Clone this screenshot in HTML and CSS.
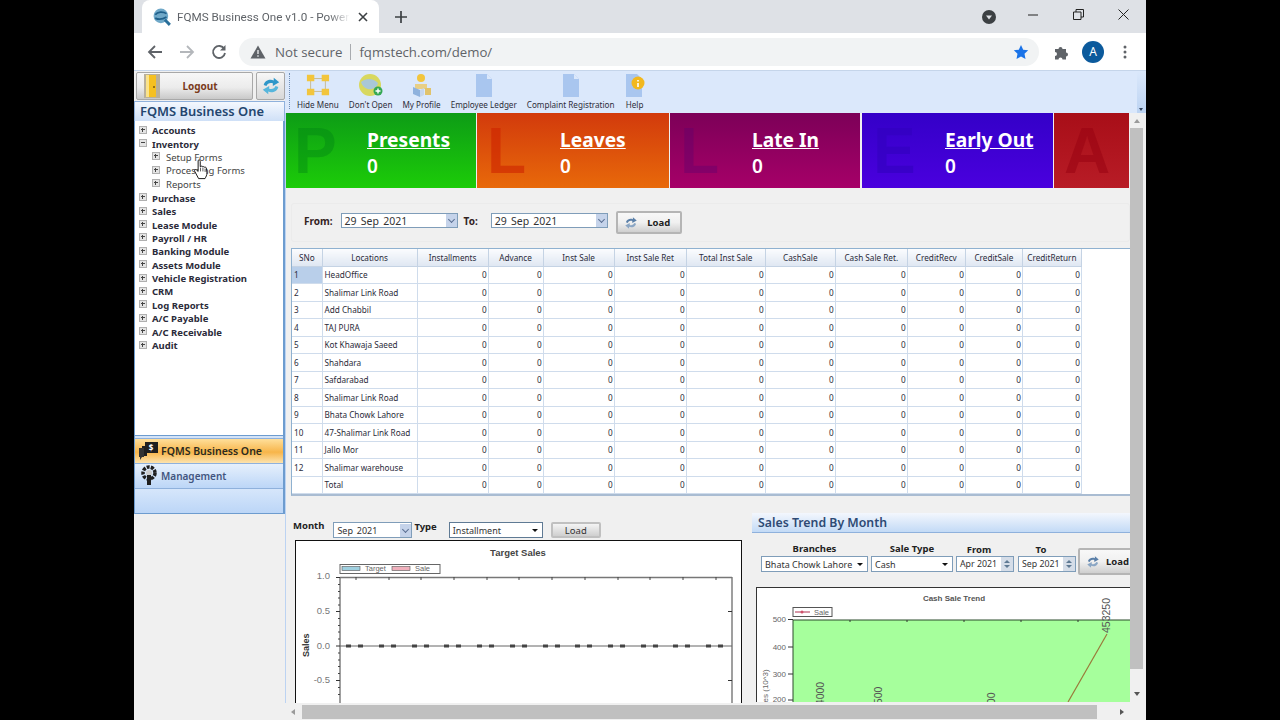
FILE: index.html
```html
<!DOCTYPE html>
<html lang="en">
<head>
  <meta charset="UTF-8">
  <title>FQMS Business One v1.0</title>
  <link rel="stylesheet" href="styles.css">
</head>
<body>
<div class="window">
  <!-- browser chrome -->
  <div class="tabstrip">
    <div class="tab">
      <svg class="favicon" width="18" height="18" viewBox="0 0 16 16"><circle cx="7" cy="7" r="6.500" fill="#6fa8c8"/><path d="M2 6c2-3 7-3 10-1M2 9c3 1.500 6 1.500 10-1" stroke="#1f5f8a" stroke-width="1.500" fill="none"/><path d="M10.500 10.500l4.500 4.500" stroke="#2a6f9a" stroke-width="2.600"/></svg>
      <span class="tab-title">FQMS Business One v1.0 - Power</span>
      <svg class="tab-close" width="10" height="10" viewBox="0 0 10 10"><path d="M1 1l8 8M9 1l-8 8" stroke="#3c4043" stroke-width="1.6"/></svg>
    </div>
    <svg class="new-tab" width="14" height="14" viewBox="0 0 14 14"><path d="M7 1v12M1 7h12" stroke="#3c4043" stroke-width="1.7"/></svg>
    <div class="window-controls">
      <svg class="tab-search" width="14" height="14" viewBox="0 0 14 14"><circle cx="7" cy="7" r="7" fill="#3c4043"/><path d="M4 5.5h6L7 9.5z" fill="#dee1e6"/></svg>
      <svg class="win-min" width="10" height="2" viewBox="0 0 10 2"><path d="M0 1h10" stroke="#222" stroke-width="1"/></svg>
      <svg class="win-restore" width="11" height="11" viewBox="0 0 11 11"><path d="M.5 3h7.500v7.500H.5zM3 3V.5h7.500V8H8" stroke="#222" fill="none"/></svg>
      <svg class="win-close" width="11" height="11" viewBox="0 0 11 11"><path d="M.5.500l10 10M10.500.500l-10 10" stroke="#222"/></svg>
    </div>
  </div>
  <div class="navbar">
    <svg class="nav-btn" width="16" height="16" viewBox="0 0 16 16"><path d="M15 8H2M8 2L2 8l6 6" stroke="#5f6368" stroke-width="1.800" fill="none"/></svg>
    <svg class="nav-btn" width="16" height="16" viewBox="0 0 16 16"><path d="M1 8h13M8 2l6 6-6 6" stroke="#b4b7bb" stroke-width="1.800" fill="none"/></svg>
    <svg class="nav-btn" width="16" height="16" viewBox="0 0 16 16"><path d="M13.300 5A6 6 0 1 0 14 9" stroke="#5f6368" stroke-width="1.800" fill="none"/><path d="M14.500 1v5.500H9z" fill="#5f6368"/></svg>
    <div class="omnibox">
      <svg width="16" height="14" viewBox="0 0 16 14"><path d="M8 .5L15.500 13.500H.5z" fill="#5f6368"/><path d="M8 5v4M8 10.200v1.600" stroke="#f1f3f4" stroke-width="1.300"/></svg>
      <span class="not-secure">Not secure</span>
      <span class="omni-sep"></span>
      <span class="url">fqmstech.com/demo/</span>
      <svg class="star" width="16" height="16" viewBox="0 0 16 16"><path d="M8 1l2.200 4.700 5 .6-3.700 3.500 1 5.100L8 12.400l-4.500 2.500 1-5.100L.8 6.300l5-.6z" fill="#1a73e8"/></svg>
    </div>
    <svg class="puzzle" width="16" height="16" viewBox="0 0 16 16"><path d="M1 5h3.500a2 2 0 1 1 4 0H12v3.500a2 2 0 1 1 0 4V15.500H8.500a2 2 0 1 0-4 0H1v-3.500a2 2 0 1 0 0-4z" fill="#5f6368"/></svg>
    <div class="avatar">A</div>
    <svg class="kebab" width="4" height="14" viewBox="0 0 4 14"><circle cx="2" cy="2" r="1.500" fill="#5f6368"/><circle cx="2" cy="7" r="1.500" fill="#5f6368"/><circle cx="2" cy="12" r="1.500" fill="#5f6368"/></svg>
  </div>

  <!-- application -->
  <div class="app">
    <aside class="sidebar">
      <div class="logout-row">
        <button class="logout-btn">
          <svg width="16" height="24" viewBox="0 0 16 24"><rect width="16" height="24" fill="#b9b09a"/><path d="M2 1h10v22H2z" fill="#f5c021"/><path d="M2 1h3v22H2z" fill="#fbe38a"/><circle cx="10" cy="13" r="1" fill="#7a5a10"/></svg>
          <span>Logout</span>
        </button>
        <button class="refresh-btn">
          <svg width="20" height="22" viewBox="0 0 22 22"><path d="M3 10c1-5 7-7 11-5V2l6 5-7 4V8c-3-1-6 0-7 3z" fill="#2f97c9"/><path d="M19 12c-1 5-7 7-11 5v3l-6-5 7-4v3c3 1 6 0 7-3z" fill="#57b6dc"/></svg>
        </button>
      </div>
      <div class="side-title">FQMS Business One</div>
      <ul class="tree">
        <li class="node"><i class="box plus"></i>Accounts</li>
        <li class="node"><i class="box minus"></i>Inventory</li>
        <li class="node sub"><i class="box plus"></i>Setup Forms</li>
        <li class="node sub"><i class="box plus"></i>Processing Forms</li>
        <li class="node sub"><i class="box plus"></i>Reports</li>
        <li class="node after-sub"><i class="box plus"></i>Purchase</li>
        <li class="node"><i class="box plus"></i>Sales</li>
        <li class="node"><i class="box plus"></i>Lease Module</li>
        <li class="node"><i class="box plus"></i>Payroll / HR</li>
        <li class="node"><i class="box plus"></i>Banking Module</li>
        <li class="node"><i class="box plus"></i>Assets Module</li>
        <li class="node"><i class="box plus"></i>Vehicle Registration</li>
        <li class="node"><i class="box plus"></i>CRM</li>
        <li class="node"><i class="box plus"></i>Log Reports</li>
        <li class="node"><i class="box plus"></i>A/C Payable</li>
        <li class="node"><i class="box plus"></i>A/C Receivable</li>
        <li class="node"><i class="box plus"></i>Audit</li>
      </ul>
      <div class="accordion">
        <div class="acc-item active">
          <svg width="20" height="20" viewBox="0 0 20 20"><path d="M6 1h13v11H8v3H3V5h3z" fill="#1f1f1f"/><path d="M0 7h5v9H3l-2 3v-3H0z" fill="#333"/><text x="12" y="9.500" class="acc-dollar">$</text></svg>
          <span>FQMS Business One</span>
        </div>
        <div class="acc-item">
          <svg width="20" height="22" viewBox="0 0 20 22"><circle cx="10" cy="8" r="6" fill="none" stroke="#1f1f1f" stroke-width="3.500" stroke-dasharray="3 1.200"/><circle cx="10" cy="8" r="3" fill="#ccc"/><path d="M8 10h4v10H8z" fill="#1f1f1f"/></svg>
          <span class="acc-mgmt">Management</span>
        </div>
        <div class="acc-blank"></div>
      </div>
    </aside>

    <div class="workspace">
      <div class="ribbon">
        <div class="grip"></div>
        <div class="tool">
          <svg width="24" height="24" viewBox="0 0 26 24"><path d="M5 5h16v14H5z" fill="none" stroke="#c8b98a"/><path d="M1 1h8v7H1zM17 1h8v7h-8zM1 16h8v7H1zM17 16h8v7h-8z" fill="#f2c53d"/></svg>
          <span>Hide Menu</span>
        </div>
        <div class="tool">
          <svg width="26" height="24" viewBox="0 0 26 24"><circle cx="12" cy="12" r="11" fill="#d8d860"/><path d="M3 9c5-4 12-4 17 1-2 8-14 9-17-1z" fill="#a9c7d8"/><circle cx="20" cy="18" r="4.500" fill="#35a853"/><path d="M20 15.500v5M17.500 18h5" stroke="#fff" stroke-width="1.400"/></svg>
          <span>Don't Open</span>
        </div>
        <div class="tool">
          <svg width="22" height="24" viewBox="0 0 22 24"><circle cx="10" cy="5" r="4" fill="#f2c53d"/><path d="M4 11h12v5H4z" fill="#e8cf86"/><path d="M2 14l7 3v7l-7-3z" fill="#8fb2dd"/><path d="M9 17l4-2v7l-4 2z" fill="#c6d7ee"/><path d="M14 15h6v7h-6z" fill="#e1c36b"/></svg>
          <span>My Profile</span>
        </div>
        <div class="tool">
          <svg width="18" height="24" viewBox="0 0 18 24"><path d="M1 1h11l5 5v18H1z" fill="#a9c6ef"/><path d="M12 1l5 5h-5z" fill="#dbe8fb"/></svg>
          <span>Employee Ledger</span>
        </div>
        <div class="tool">
          <svg width="18" height="24" viewBox="0 0 18 24"><path d="M1 1h11l5 5v18H1z" fill="#a9c6ef"/><path d="M12 1l5 5h-5z" fill="#dbe8fb"/></svg>
          <span>Complaint Registration</span>
        </div>
        <div class="tool">
          <svg width="20" height="24" viewBox="0 0 20 24"><path d="M1 1h11l5 5v18H1z" fill="#a9c6ef"/><circle cx="13" cy="10" r="6.500" fill="#f2b81e"/><path d="M13 7v1.500M13 10v4" stroke="#fff" stroke-width="1.600"/></svg>
          <span>Help</span>
        </div>
        <div class="ribbon-end"><i></i></div>
      </div>

      <div class="work-body">
        <div class="viewport">
          <div class="tiles">
            <div class="tile green"><span class="ghost">P</span><div class="tile-text"><a>Presents</a><b>0</b></div></div>
            <div class="tile orange"><span class="ghost">L</span><div class="tile-text"><a>Leaves</a><b>0</b></div></div>
            <div class="tile purple"><span class="ghost">L</span><div class="tile-text"><a>Late In</a><b>0</b></div></div>
            <div class="tile blue"><span class="ghost">E</span><div class="tile-text"><a>Early Out</a><b>0</b></div></div>
            <div class="tile red"><span class="ghost">A</span></div>
          </div>

          <div class="filter">
            <label>From:</label>
            <div class="combo date-combo"><span>29 Sep 2021</span><i class="drop"></i></div>
            <label>To:</label>
            <div class="combo date-combo"><span>29 Sep 2021</span><i class="drop"></i></div>
            <button class="load-btn">
              <svg width="14" height="14" viewBox="0 0 22 22"><path d="M3 10c1-5 7-7 11-5V2l6 5-7 4V8c-3-1-6 0-7 3z" fill="#5a7fa8"/><path d="M19 12c-1 5-7 7-11 5v3l-6-5 7-4v3c3 1 6 0 7-3z" fill="#8ba6c4"/></svg>
              <span>Load</span>
            </button>
          </div>

          <div class="grid-wrap">
            <table class="grid">
              <thead>
                <tr><th class="c-sno">SNo</th><th class="c-loc">Locations</th><th class="c1">Installments</th><th class="c2">Advance</th><th class="c3">Inst Sale</th><th class="c4">Inst Sale Ret</th><th class="c5">Total Inst Sale</th><th class="c6">CashSale</th><th class="c7">Cash Sale Ret.</th><th class="c8">CreditRecv</th><th class="c9">CreditSale</th><th class="c10">CreditReturn</th></tr>
              </thead>
              <tbody>
                <tr class="selected"><td>1</td><td>HeadOffice</td><td>0</td><td>0</td><td>0</td><td>0</td><td>0</td><td>0</td><td>0</td><td>0</td><td>0</td><td>0</td></tr>
                <tr><td>2</td><td>Shalimar Link Road</td><td>0</td><td>0</td><td>0</td><td>0</td><td>0</td><td>0</td><td>0</td><td>0</td><td>0</td><td>0</td></tr>
                <tr><td>3</td><td>Add Chabbil</td><td>0</td><td>0</td><td>0</td><td>0</td><td>0</td><td>0</td><td>0</td><td>0</td><td>0</td><td>0</td></tr>
                <tr><td>4</td><td>TAJ PURA</td><td>0</td><td>0</td><td>0</td><td>0</td><td>0</td><td>0</td><td>0</td><td>0</td><td>0</td><td>0</td></tr>
                <tr><td>5</td><td>Kot Khawaja Saeed</td><td>0</td><td>0</td><td>0</td><td>0</td><td>0</td><td>0</td><td>0</td><td>0</td><td>0</td><td>0</td></tr>
                <tr><td>6</td><td>Shahdara</td><td>0</td><td>0</td><td>0</td><td>0</td><td>0</td><td>0</td><td>0</td><td>0</td><td>0</td><td>0</td></tr>
                <tr><td>7</td><td>Safdarabad</td><td>0</td><td>0</td><td>0</td><td>0</td><td>0</td><td>0</td><td>0</td><td>0</td><td>0</td><td>0</td></tr>
                <tr><td>8</td><td>Shalimar Link Road</td><td>0</td><td>0</td><td>0</td><td>0</td><td>0</td><td>0</td><td>0</td><td>0</td><td>0</td><td>0</td></tr>
                <tr><td>9</td><td>Bhata Chowk Lahore</td><td>0</td><td>0</td><td>0</td><td>0</td><td>0</td><td>0</td><td>0</td><td>0</td><td>0</td><td>0</td></tr>
                <tr><td>10</td><td>47-Shalimar Link Road</td><td>0</td><td>0</td><td>0</td><td>0</td><td>0</td><td>0</td><td>0</td><td>0</td><td>0</td><td>0</td></tr>
                <tr><td>11</td><td>Jallo Mor</td><td>0</td><td>0</td><td>0</td><td>0</td><td>0</td><td>0</td><td>0</td><td>0</td><td>0</td><td>0</td></tr>
                <tr><td>12</td><td>Shalimar warehouse</td><td>0</td><td>0</td><td>0</td><td>0</td><td>0</td><td>0</td><td>0</td><td>0</td><td>0</td><td>0</td></tr>
                <tr><td></td><td>Total</td><td>0</td><td>0</td><td>0</td><td>0</td><td>0</td><td>0</td><td>0</td><td>0</td><td>0</td><td>0</td></tr>
              </tbody>
            </table>
          </div>

          <div class="lower">
            <section class="target-panel">
              <div class="target-form">
                <label class="lbl-month">Month</label>
                <div class="combo month-combo"><span>Sep 2021</span><i class="drop"></i></div>
                <label class="lbl-type">Type</label>
                <div class="combo type-combo"><span>Installment</span><i class="caret"></i></div>
                <button class="plain-btn">Load</button>
              </div>
              <svg class="chart target-chart" width="447" height="163" viewBox="296 541 445 162">
                <text x="518" y="556" class="c-title" text-anchor="middle">Target Sales</text>
                <rect x="340" y="564.500" width="100" height="9" fill="#fff" stroke="#666"/>
                <rect x="342" y="566.500" width="18" height="4" fill="#9fd0e0" stroke="#555" stroke-width=".6"/>
                <text x="365" y="571" class="c-legend">Target</text>
                <rect x="392" y="566.500" width="18" height="4" fill="#f0b0bc" stroke="#555" stroke-width=".6"/>
                <text x="415" y="571" class="c-legend">Sale</text>
                <path d="M340 577.500H732M340 577V703M732 577V703" stroke="#777" stroke-width="1.400" fill="none"/>
                <path d="M340 646H732" stroke="#666"/>
                <path d="M336 577.500h4M336 611.500h4M336 646h4M336 680.500h4M728 611.500h4M728 680.500h4" stroke="#333"/>
                <path d="M338 584.500h2M338 591.500h2M338 598h2M338 605h2M338 618.500h2M338 625.500h2M338 632h2M338 639h2M338 653h2M338 660h2M338 666.500h2M338 673.500h2M338 687.500h2M338 694.500h2" stroke="#444"/>
                <path d="M356 577v3M389 577v3M421 577v3M454 577v3M487 577v3M519 577v3M552 577v3M585 577v3M618 577v3M650 577v3M683 577v3M716 577v3" stroke="#444"/>
                <path class="zero-dots" d="M346 646h5M358 646h5M379 646h5M391 646h5M412 646h5M424 646h5M444 646h5M456 646h5M477 646h5M489 646h5M510 646h5M522 646h5M543 646h5M555 646h5M575 646h5M587 646h5M608 646h5M620 646h5M641 646h5M653 646h5M673 646h5M685 646h5M706 646h5M718 646h5"/>
                <text x="330" y="579" class="c-tick" text-anchor="end">1.0</text>
                <text x="330" y="614" class="c-tick" text-anchor="end">0.5</text>
                <text x="330" y="649" class="c-tick" text-anchor="end">0.0</text>
                <text x="330" y="683" class="c-tick" text-anchor="end">-0.5</text>
                <text transform="translate(309 657) rotate(-90)" class="c-axis">Sales</text>
              </svg>
            </section>

            <section class="trend-panel">
              <h3 class="trend-head">Sales Trend By Month</h3>
              <div class="trend-form">
                <div class="field"><label>Branches</label><div class="combo branch-combo"><span>Bhata Chowk Lahore</span><i class="caret"></i></div></div>
                <div class="field"><label>Sale Type</label><div class="combo saletype-combo"><span>Cash</span><i class="caret"></i></div></div>
                <div class="field spin-field"><label>From</label><div class="combo spin-combo"><span>Apr 2021</span><i class="spin"></i></div></div>
                <div class="field spin-field"><label>To</label><div class="combo spin-combo"><span>Sep 2021</span><i class="spin"></i></div></div>
                <button class="load-btn trend-load">
                  <svg width="14" height="14" viewBox="0 0 22 22"><path d="M3 10c1-5 7-7 11-5V2l6 5-7 4V8c-3-1-6 0-7 3z" fill="#5a7fa8"/><path d="M19 12c-1 5-7 7-11 5v3l-6-5 7-4v3c3 1 6 0 7-3z" fill="#8ba6c4"/></svg>
                  <span>Load</span>
                </button>
              </div>
              <svg class="chart trend-chart" width="374" height="115" viewBox="757 589 373 114">
                <rect x="793" y="621" width="337" height="82" fill="#a6ff9c"/>
                <path d="M793 621H1130M793 621V703" stroke="#2b4a2b" fill="none"/>
                <path d="M788 620.500h5M788 648h5M788 675h5M788 701h5" stroke="#333"/>
                <path d="M850 621v2M907 621v2M964 621v2M1021 621v2M1078 621v2" stroke="#333"/>
                <text x="786" y="623" class="c-small" text-anchor="end">500</text>
                <text x="786" y="651" class="c-small" text-anchor="end">400</text>
                <text x="786" y="678" class="c-small" text-anchor="end">300</text>
                <text x="786" y="703" class="c-small" text-anchor="end">200</text>
                <text x="954" y="602" class="c-title2" text-anchor="middle">Cash Sale Trend</text>
                <rect x="793" y="608.500" width="39" height="9" fill="#fff" stroke="#555"/>
                <path d="M795 613h15" stroke="#b03050"/><circle cx="802" cy="613" r="1.500" fill="#d0506a"/>
                <text x="814" y="615.500" class="c-legend">Sale</text>
                <path d="M1107 635L1068 703" stroke="#9a7a3a" stroke-width="1.200"/>
                <text transform="translate(1110 634) rotate(-90)" class="c-value">453250</text>
                <text transform="translate(824 712) rotate(-90)" class="c-value">44000</text>
                <text transform="translate(882 711) rotate(-90)" class="c-value">2500</text>
                <text transform="translate(995 711) rotate(-90)" class="c-value">500</text>
                <text transform="translate(768 715) rotate(-90)" class="c-small">Sales (10^3)</text>
              </svg>
            </section>
          </div>
        </div>

        <div class="vscroll">
          <i class="arrow up"></i>
          <div class="vthumb"></div>
          <i class="arrow down"></i>
        </div>
      </div>

      <div class="hscroll">
        <i class="arrow left"></i>
        <div class="hthumb"></div>
        <i class="arrow right"></i>
      </div>
    </div>
  </div>

  <svg class="hand-cursor" width="18" height="22" viewBox="0 0 16 23"><path d="M5 1.500c1-1 2.200-.5 2.200 1V8l1-.5c.8-.2 1.500 0 1.700.7.800-.5 1.700-.2 1.900.5.800-.3 1.700 0 1.900.9l.5 4.900c0 2.500-1 4-2 6H5.500L1.500 13c-.8-1.500.6-2.500 1.700-1.700L5 13z" fill="#fff" stroke="#111" stroke-width="1"/><path d="M7.500 9v4M10 9v4M12.300 10v3.500" stroke="#111" stroke-width=".7"/></svg>
</div>
</body>
</html>
```

FILE: styles.css
```css
* {
  box-sizing: border-box;
}
body {
  margin: 0;
  height: 720px;
  overflow: hidden;
  background-color: #000;
  display: flex;
  justify-content: center;
  font-family: "Noto Sans", "Open Sans", sans-serif;
}
.window {
  position: relative;
  width: 1012px;
  height: 720px;
  display: flex;
  flex-direction: column;
  background-color: #f0f0f0;
  overflow: hidden;
}

/* browser chrome */
.tabstrip {
  height: 33px;
  flex: none;
  background-color: #dee1e6;
  display: flex;
  align-items: flex-end;
  padding-left: 8px;
}
.tab {
  width: 237px;
  height: 33px;
  background-color: #fff;
  border-radius: 8px 8px 0 0;
  display: flex;
  align-items: center;
  padding: 0 11px 0 11px;
}
.tab-title {
  flex: 1;
  min-width: 0;
  margin-left: 6px;
  font-size: 11.700px;
  color: #5f6368;
  white-space: nowrap;
  font-family: Roboto, sans-serif;
  -webkit-mask-image: linear-gradient(to right, #000 88%, transparent);
  mask-image: linear-gradient(to right, #000 88%, transparent);
}
.tab-close {
  margin-left: 8px;
}
.new-tab {
  margin: 0 0 9px 15px;
}
.window-controls {
  margin-left: auto;
  height: 33px;
  display: flex;
  align-items: center;
  padding-right: 17px;
}
.win-min {
  margin-left: 32px;
  margin-top: -4px;
}
.win-restore {
  margin-left: 35px;
  margin-top: -4px;
}
.win-close {
  margin-left: 34px;
  margin-top: -4px;
}
.navbar {
  height: 37px;
  flex: none;
  background-color: #fff;
  display: flex;
  align-items: center;
  padding-left: 13px;
}
.nav-btn {
  margin-right: 16px;
}
.omnibox {
  width: 800px;
  height: 28px;
  margin-left: -4px;
  border-radius: 14px;
  background-color: #f1f3f4;
  display: flex;
  align-items: center;
  padding: 0 10px 0 11px;
}
.not-secure {
  margin-left: 9px;
  font-size: 13.300px;
  color: #5f6368;
  font-family: "Open Sans", sans-serif;
}
.omni-sep {
  width: 1px;
  height: 16px;
  background-color: #a8abaf;
  margin: 0 8px;
}
.url {
  font-size: 13.200px;
  color: #5f6368;
  font-family: "Open Sans", sans-serif;
}
.star {
  margin-left: auto;
}
.puzzle {
  margin-left: 15px;
}
.avatar {
  width: 22px;
  height: 22px;
  margin-left: 12px;
  border-radius: 50%;
  background-color: #0b5a9c;
  color: #fff;
  font-size: 12px;
  display: flex;
  align-items: center;
  justify-content: center;
}
.kebab {
  margin-left: 19px;
}

/* app frame */
.app {
  flex: 1;
  min-height: 0;
  display: flex;
  border-top: 1px solid #c5d5ea;
}
.sidebar {
  width: 151px;
  flex: none;
  display: flex;
  flex-direction: column;
  height: 443px;
  background-color: #e8f0fb;
}
.logout-row {
  height: 30px;
  flex: none;
  display: flex;
  padding: 1px 0 0 2px;
  background-color: #f0f0f0;
}
.logout-btn {
  width: 117px;
  height: 28px;
  padding: 0 0 0 7px;
  border: 1px solid #a8a8a8;
  border-radius: 2px;
  background: linear-gradient(#f7f7f7, #ececec 55%, #c9c9c9);
  display: flex;
  align-items: center;
  font-family: inherit;
}
.logout-btn span {
  flex: 1;
  padding-right: 12px;
  font-size: 10px;
  font-weight: 700;
  color: #7a3b1c;
}
.refresh-btn {
  width: 29px;
  height: 28px;
  margin-left: 3px;
  padding: 0;
  border: 1px solid #a8a8a8;
  border-radius: 2px;
  background: linear-gradient(#f7f7f7, #d8d8d8);
  display: flex;
  align-items: center;
  justify-content: center;
}
.side-title {
  height: 20px;
  flex: none;
  padding-left: 5px;
  border: 1px solid #8fb1dc;
  border-bottom: none;
  background: linear-gradient(#f4f8fe, #cfe0f7);
  color: #23456f;
  font-size: 12.900px;
  font-weight: 600;
  line-height: 18px;
  white-space: nowrap;
}
.tree {
  flex: 1;
  margin: 0;
  padding: 3px 0 0 0;
  list-style: none;
  background-color: #fff;
  border-left: 1px solid #6d9ccf;
  border-right: 2px solid #6d9ccf;
  border-bottom: 1px solid #6d9ccf;
}
.node {
  height: 13.400px;
  display: flex;
  align-items: center;
  padding-left: 4px;
  font-size: 9.500px;
  font-weight: 700;
  color: #2b2b3a;
  white-space: nowrap;
}
.node.sub {
  padding-left: 17px;
  font-weight: 400;
  color: #444;
}
.node.after-sub {
  margin-top: 0.600px;
}
.box {
  position: relative;
  width: 8px;
  height: 8px;
  margin-right: 5px;
  flex: none;
  margin-top: -2px;
  border: 1px solid #b0b0b0;
  background-color: #e4e4e4;
}
.node.sub .box {
  margin-right: 6px;
}
.box::before {
  content: "";
  position: absolute;
  left: 1px;
  top: 2px;
  width: 4px;
  height: 1px;
  background-color: #444;
}
.box.plus::after {
  content: "";
  position: absolute;
  left: 2px;
  top: 1px;
  width: 1px;
  height: 4px;
  background-color: #444;
}
.accordion {
  height: 78px;
  flex: none;
  padding-top: 2px;
  background-color: #d4e3f7;
  border-left: 1px solid #6d9ccf;
  border-right: 2px solid #6d9ccf;
  border-bottom: 1px solid #6d9ccf;
  display: flex;
  flex-direction: column;
}
.acc-item {
  height: 25px;
  flex: none;
  display: flex;
  align-items: center;
  padding-left: 4px;
  gap: 2px;
  font-size: 10.500px;
  font-weight: 600;
  color: #42557f;
  border-top: 1px solid #8fb1dc;
  background: linear-gradient(#e6f0fc, #bcd6f7);
  white-space: nowrap;
}
.acc-item.active {
  color: #2a2a20;
  background: linear-gradient(#ffdf9a, #f7b54a 55%, #fde3ae);
}
.acc-mgmt {
  font-size: 10px;
}
.acc-dollar {
  font-size: 8px;
  font-weight: 700;
  fill: #fff;
  text-anchor: middle;
}
.acc-blank {
  flex: 1;
  border-top: 1px solid #8fb1dc;
  background: linear-gradient(#d6e6fb, #bcd6f7);
}

/* ribbon */
.workspace {
  flex: 1;
  min-width: 0;
  display: flex;
  flex-direction: column;
}
.ribbon {
  height: 42px;
  flex: none;
  display: flex;
  background-color: #dbe8fb;
  padding-top: 2px;
}
.grip {
  width: 1px;
  height: 36px;
  margin: 0 7px 0 4px;
  border-left: 1px dotted #6d8db5;
}
.tool {
  display: flex;
  flex-direction: column;
  align-items: center;
  justify-content: space-between;
  height: 37px;
  margin-right: 10px;
  font-size: 8.150px;
  color: #2e2e3a;
  white-space: nowrap;
}
.ribbon-end {
  width: 9px;
  margin: -2px 0 0 auto;
  background: linear-gradient(#dbe8fb, #bcd3f2);
  position: relative;
}
.ribbon-end i {
  position: absolute;
  left: 2px;
  bottom: 2px;
  border-left: 2.500px solid transparent;
  border-right: 2.500px solid transparent;
  border-top: 3px solid #33445e;
}

.work-body {
  flex: 1;
  min-height: 0;
  display: flex;
}
.viewport {
  width: 845px;
  flex: none;
  overflow: hidden;
  border-left: 1px solid #bcd3f2;
  background-color: #f0f0f0;
}

/* tiles */
.tiles {
  display: flex;
  gap: 1px;
  height: 75px;
}
.tile {
  position: relative;
  width: 191px;
  flex: none;
  color: #fff;
}
.tile.green {
  width: 190px;
  background: linear-gradient(#0d9c16, #1ccc08);
}
.tile.orange {
  width: 192px;
  background: linear-gradient(#d23a0c, #e8690a);
}
.tile.purple {
  width: 190px;
  margin-right: 1px;
  background: linear-gradient(#7c0058, #a60068);
}
.tile.blue {
  background: linear-gradient(#3400c8, #4a00de);
}
.tile.red {
  width: 75px;
  background: linear-gradient(#a80e18, #b81c26);
}
.ghost {
  position: absolute;
  left: 8px;
  top: 1px;
  font-family: "Liberation Sans", sans-serif;
  font-size: 64px;
  line-height: 74px;
  font-weight: 700;
  color: rgba(0, 130, 20, 0.4);
}
.tile.orange .ghost {
  left: 10px;
  color: rgba(205, 35, 0, 0.6);
}
.tile.purple .ghost {
  left: 10px;
  color: rgba(95, 0, 110, 0.4);
}
.tile.blue .ghost {
  left: 11px;
  color: rgba(50, 0, 190, 0.6);
}
.tile.red .ghost {
  left: 10px;
  color: rgba(150, 0, 15, 0.5);
}
.tile-text {
  position: absolute;
  left: 81px;
  top: 14px;
  display: flex;
  flex-direction: column;
  font-weight: 700;
}
.tile.orange .tile-text, .tile.blue .tile-text {
  left: 83px;
}
.tile.purple .tile-text {
  left: 82px;
}
.tile-text a {
  font-size: 19.200px;
  line-height: 26px;
  text-decoration: underline;
  white-space: nowrap;
}
.tile-text b {
  font-size: 19px;
  line-height: 26px;
  font-weight: 600;
}

/* from / to filter */
.filter {
  height: 39px;
  margin: 15px 0 0 5px;
  border: 1px solid #ebebeb;
  border-radius: 3px;
  display: flex;
  align-items: center;
  padding: 0 0 4px 12px;
}
.filter label {
  font-size: 10px;
  font-weight: 700;
  color: #33231f;
  margin-right: 8px;
}
.filter .combo + label {
  margin-left: 6px;
  margin-right: 13px;
}
.combo {
  height: 15px;
  display: flex;
  align-items: center;
  background-color: #fff;
  border: 1px solid #7f9db9;
  font-size: 9px;
  color: #333;
  white-space: nowrap;
}
.combo span {
  flex: 1;
  padding-left: 3px;
}
.date-combo {
  width: 117px;
  font-size: 10.500px;
}
.date-combo span, .month-combo span {
  word-spacing: 1.500px;
}
.drop {
  position: relative;
  width: 11px;
  height: 13px;
  background-color: #c5d3ea;
}
.drop::after {
  content: "";
  position: absolute;
  left: 3px;
  top: 3px;
  width: 4px;
  height: 4px;
  border-right: 1.500px solid #5a6f92;
  border-bottom: 1.500px solid #5a6f92;
  transform: rotate(45deg);
}
.caret {
  margin-right: 4px;
  border-left: 3px solid transparent;
  border-right: 3px solid transparent;
  border-top: 3px solid #111;
}
.load-btn {
  width: 66px;
  height: 23px;
  margin: 4px 0 0 8px;
  padding: 0 0 0 6px;
  border: 2px solid #b5b5b5;
  border-radius: 2px;
  background: linear-gradient(#f8f8f8, #f0f0f0 50%, #cfcfcf);
  display: flex;
  align-items: center;
  font-family: inherit;
}
.load-btn span {
  flex: 1;
  font-size: 9.500px;
  font-weight: 700;
  color: #222;
}

/* grid */
.grid-wrap {
  margin: 6px 0 0 5px;
  border-top: 1px solid #8fb1d0;
  border-left: 1px solid #8fb1d0;
  border-bottom: 2px solid #a9bcd2;
  background-color: #fff;
  height: 248px;
}
.grid {
  border-collapse: collapse;
  table-layout: fixed;
  width: 790px;
  font-size: 8.200px;
  color: #2b2b3a;
}
.grid th {
  height: 17px;
  padding: 0;
  font-weight: 400;
  border-right: 1px solid #c5d3e4;
  border-bottom: 1px solid #c5d3e4;
  background: linear-gradient(#fbfcfe, #dfe7f2);
  white-space: nowrap;
}
.grid td {
  height: 17.500px;
  padding: 0 1px 0 2px;
  text-align: right;
  border-right: 1px solid #cfdcec;
  border-bottom: 1px solid #cfdcec;
  white-space: nowrap;
}
.grid td:nth-child(1), .grid td:nth-child(2) {
  text-align: left;
}
.grid tr.selected td:first-child {
  background-color: #b9cfea;
}
.c-sno { width: 30px; }
.c-loc { width: 95px; }
.c1 { width: 71px; }
.c2 { width: 55px; }
.c3 { width: 71px; }
.c4 { width: 72px; }
.c5 { width: 79px; }
.c6 { width: 70px; }
.c7 { width: 72px; }
.c8 { width: 58px; }
.c9 { width: 57px; }
.c10 { width: 59px; }

/* lower panels */
.lower {
  display: flex;
  margin-top: 18px;
  height: 190px;
}
.target-panel {
  width: 466px;
  flex: none;
  padding-left: 9px;
}
.target-form {
  display: flex;
  align-items: center;
  height: 26px;
  margin-left: -2px;
  padding-top: 6px;
  font-size: 9.500px;
}
.lbl-month, .lbl-type {
  font-weight: 700;
  color: #222;
  font-size: 9.500px;
}
.lbl-month {
  margin: -10px 9px 0 0;
}
.lbl-type {
  margin: -8px 12px 0 2px;
}
.month-combo {
  width: 79px;
  height: 16px;
}
.type-combo {
  width: 94px;
  height: 16px;
  border-color: #5f7a94;
  margin-right: 8px;
}
.plain-btn {
  width: 50px;
  height: 16px;
  padding: 0;
  border: 2px solid #c0c0c0;
  border-radius: 2px;
  background: linear-gradient(#f4f4f4, #cfcfcf);
  font-size: 9.500px;
  font-family: inherit;
  color: #333;
}
.chart {
  display: block;
  background-color: #fff;
}
.target-chart {
  border-top: 1px solid #111;
  border-left: 1px solid #111;
  border-right: 1px solid #111;
}
.c-title {
  font: 700 9.500px "Liberation Sans", sans-serif;
  fill: #444;
}
.c-title2 {
  font: 700 8px "Liberation Sans", sans-serif;
  fill: #555;
}
.c-legend {
  font: 7.500px "Liberation Sans", sans-serif;
  fill: #666;
}
.c-tick {
  font: 9.500px "Liberation Sans", sans-serif;
  fill: #777;
}
.c-small {
  font: 8px "Liberation Sans", sans-serif;
  fill: #666;
}
.c-axis {
  font: 700 9px "Liberation Sans", sans-serif;
  fill: #333;
}
.c-value {
  font: 10.500px "Liberation Sans", sans-serif;
  fill: #555;
}
.zero-dots {
  stroke: #444;
  stroke-width: 3;
  fill: none;
}
.trend-panel {
  flex: 1;
  min-width: 0;
  margin-top: -1px;
}
.trend-head {
  margin: 0;
  height: 20px;
  line-height: 19px;
  padding-left: 6px;
  font-size: 12.300px;
  font-weight: 600;
  color: #2e4a74;
  background: linear-gradient(#f3f7fd, #c3daf6);
  border-bottom: 1px solid #8fb1dc;
  white-space: nowrap;
}
.trend-form {
  height: 54px;
  display: flex;
  align-items: flex-end;
  padding: 0 0 15px 9px;
  white-space: nowrap;
}
.field {
  display: flex;
  flex-direction: column;
  align-items: center;
  gap: 1px;
  margin-right: 3px;
}
.field label {
  font-size: 9.500px;
  font-weight: 700;
  color: #222;
  line-height: 13px;
}
.spin-field {
  gap: 0;
  margin-right: 4px;
}
.spin-field label {
  margin-right: 12px;
}
.branch-combo {
  width: 107px;
  height: 16px;
}
.saletype-combo {
  width: 82px;
  height: 16px;
}
.spin-combo {
  width: 58px;
  height: 16px;
  font-size: 8.800px;
}
.spin {
  position: relative;
  flex: none;
  width: 12px;
  height: 14px;
  background-color: #d5dde8;
}
.spin::before, .spin::after {
  content: "";
  position: absolute;
  left: 3px;
  border-left: 3px solid transparent;
  border-right: 3px solid transparent;
}
.spin::before {
  top: 3px;
  border-bottom: 3px solid #5f7a94;
}
.spin::after {
  bottom: 3px;
  border-top: 3px solid #5f7a94;
}
.trend-load {
  flex: none;
  margin: 0 0 -3px -2px;
  width: 66px;
  height: 27px;
}
.trend-load span {
  flex: none;
  margin-left: 6px;
}
.trend-chart {
  margin-left: 4px;
  border-top: 1px solid #333;
  border-left: 1px solid #333;
}

/* scrollbars */
.vscroll {
  flex: 1;
  display: flex;
  flex-direction: column;
  align-items: center;
  background-color: #f0f0f0;
  padding: 6px 3px 0 0;
}
.vthumb {
  width: 13px;
  height: 541px;
  flex: none;
  margin: 5px 0 0;
  background-color: #c0c0c0;
}
.hscroll {
  height: 17px;
  flex: none;
  display: flex;
  align-items: center;
  padding: 0 19px 0 6px;
  background-color: #f0f0f0;
}
.hthumb {
  width: 795px;
  height: 14px;
  margin-left: 7px;
  background-color: #c0c0c0;
}
.arrow {
  flex: none;
  width: 0;
  height: 0;
  border: 3.500px solid transparent;
}
.arrow.up {
  border-top: none;
  border-bottom: 4px solid #9a9a9a;
}
.arrow.down {
  border-bottom: none;
  border-top: 4px solid #555;
  margin-top: auto;
  margin-bottom: 7px;
}
.arrow.left {
  border-left: none;
  border-right: 4px solid #9a9a9a;
}
.arrow.right {
  border-right: none;
  border-left: 4px solid #555;
  margin-left: 23px;
}

/* mouse pointer over the tree */
.hand-cursor {
  position: absolute;
  left: 58px;
  top: 159px;
}
```
